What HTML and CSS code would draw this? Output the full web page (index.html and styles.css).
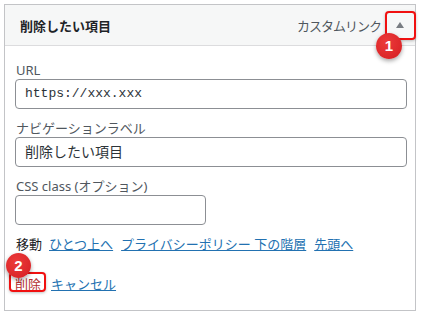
FILE: index.html
```html
<!DOCTYPE html>
<html lang="ja">
<head>
<meta charset="utf-8">
<link rel="stylesheet" href="styles.css">
</head>
<body>
<div class="box">
  <div class="head">
    <span class="title">削除したい項目</span>
    <span class="type">カスタムリンク</span>
    <span class="toggle"><span class="arrow"></span></span>
  </div>
  <div class="body">
    <div class="label">URL</div>
    <div class="input mono">https://xxx.xxx</div>
    <div class="label">ナビゲーションラベル</div>
    <div class="input">削除したい項目</div>
    <div class="label">CSS class (オプション)</div>
    <div class="input short"></div>
    <div class="move"><span>移動</span><a>ひとつ上へ</a><a>プライバシーポリシー 下の階層</a><a>先頭へ</a></div>
    <div class="actions"><a class="del">削除</a><a>キャンセル</a></div>
  </div>
  <span class="mark mark1"></span>
  <span class="badge badge1">1</span>
  <span class="mark mark2"></span>
  <span class="badge badge2">2</span>
</div>
</body>
</html>
```
FILE: styles.css
```css
html, body { margin: 0; padding: 0; background: #fff; }
body {
  font-family: "Noto Sans", "Noto Sans CJK JP", sans-serif;
  font-size: 13px;
  color: #3c434a;
  width: 421px; height: 315px; overflow: hidden;
}
.box {
  position: relative;
  margin: 4px 0 0 4px;
  width: 410px;
  height: 305px;
  border: 1px solid #c3c4c7;
}
.head {
  display: flex;
  align-items: center;
  height: 40px;
  background: #f6f7f7;
  border-bottom: 1px solid #dcdcde;
  padding-left: 15px;
}
.title { font-weight: bold; color: #1d2327; font-size: 13px; flex: 1; }
.type { color: #50575e; font-size: 13px; margin-right: 4px; letter-spacing: -1px; }
.toggle { width: 30px; height: 28px; display: flex; align-items: center; justify-content: center; }
.arrow {
  width: 0; height: 0;
  border-left: 4px solid transparent;
  border-right: 4px solid transparent;
  border-bottom: 6px solid #787c82;
}
.body { padding: 15px 8px 0 10px; }
.label { height: 18px; line-height: 18px; color: #50575e; padding-left: 1px; }
.input {
  height: 30px;
  box-sizing: border-box;
  border: 1px solid #8c8f94;
  border-radius: 4px;
  margin-bottom: 10px;
  padding: 0 9px;
  line-height: 28px;
  color: #2c3338;
  font-size: 14px;
}
.mono { font-family: "Liberation Mono", "DejaVu Sans Mono", monospace; font-size: 13px; }
.short { width: 191px; }
.move { display: flex; gap: 8px; height: 18px; line-height: 18px; color: #1d2327; padding-left: 1px; }
.move span { margin-right: -1px; }
.move a, .actions a { color: #2271b1; text-decoration: underline; }
.actions { display: flex; gap: 10px; margin-top: 22px; height: 18px; line-height: 18px; padding-left: 0; }
.actions .del { color: #b32d2e; }
.mark {
  position: absolute;
  border: 2px solid #f01010;
  border-radius: 4px;
  box-shadow: 0 1px 3px rgba(0,0,0,0.25);
}
.mark1 { left: 380px; top: 6px; width: 27px; height: 25px; }
.mark2 { left: 4px; top: 267px; width: 33px; height: 16px; }
.badge {
  position: absolute;
  width: 26px; height: 26px;
  border-radius: 50%;
  background: radial-gradient(circle at 40% 35%, #ec3a3a, #d41e22);
  color: #fff;
  font-family: "Liberation Sans", sans-serif;
  font-weight: bold;
  font-size: 15px;
  line-height: 26px;
  text-align: center;
  box-shadow: 0 2px 4px rgba(0,0,0,0.35);
}
.badge1 { left: 371px; top: 28px; }
.badge2 { left: 1px; top: 248px; width: 25px; height: 25px; line-height: 25px; }
```
